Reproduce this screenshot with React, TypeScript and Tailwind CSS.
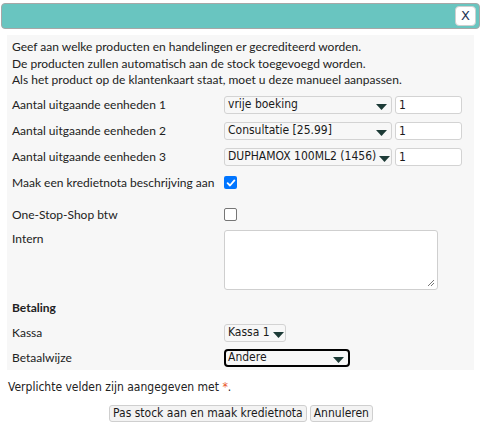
import React from "react";

const FONT = "font-['Lato','Open_Sans',sans-serif] text-[12px] text-[#222] whitespace-nowrap";
const LABEL = `${FONT} leading-[18px]`;
const CTRL = "font-['DejaVu_Sans_Condensed','DejaVu_Sans',sans-serif] text-[12px] text-[#1a1a1a]";

function Arrow() {
  return (
    <svg width="11" height="6" viewBox="0 0 11 6" className="shrink-0">
      <path d="M0 0 H11 L5.5 6 Z" fill="#1c3a36" />
    </svg>
  );
}

function Select({ text, w, focused = false, tight = false }: { text: string; w: string; focused?: boolean; tight?: boolean }) {
  return (
    <div
      className={`${w} h-[18px] flex items-center ${tight ? "gap-[3px]" : "justify-between"} ${
        focused ? "border-2 border-black rounded-[4px] pl-[2px] pr-[4px]" : "border border-[#d3d3d3] rounded-[3px] pl-[3px] pr-[4px]"
      } bg-[#f7f7f7] ${CTRL} leading-none overflow-hidden whitespace-nowrap`}
    >
      <span className="pb-[1px]">{text}</span>
      <span className="pt-[4px]"><Arrow /></span>
    </div>
  );
}

function Input({ v }: { v: string }) {
  return (
    <div className={`w-[67px] h-[18px] border border-[#d3d3d3] rounded-[3px] bg-white flex items-center pl-[3px] ${CTRL} leading-none`}>
      {v}
    </div>
  );
}

function Checkbox({ checked }: { checked: boolean }) {
  return checked ? (
    <div className="w-[13px] h-[13px] rounded-[2px] bg-[#0075ff] flex items-center justify-center">
      <svg width="10" height="10" viewBox="0 0 10 10">
        <path d="M1.6 5.2 L4 7.5 L8.4 2.4" stroke="white" strokeWidth="1.8" fill="none" strokeLinecap="round" strokeLinejoin="round" />
      </svg>
    </div>
  ) : (
    <div className="w-[13px] h-[13px] rounded-[2px] border border-[#767676] bg-white" />
  );
}

function Row({ label, children, className = "" }: { label: string; children: React.ReactNode; className?: string }) {
  return (
    <div className={`flex items-center h-[18px] ${className}`}>
      <div className={`w-[212px] shrink-0 ${LABEL}`}>{label}</div>
      <div className="flex items-center gap-[3px]">{children}</div>
    </div>
  );
}

export default function App() {
  return (
    <div className="w-[481px] h-[427px] bg-white relative">
      <div className="mx-[1px] mt-[3px] h-[26px] bg-[#69c5c0] border border-[#a7a7a7] rounded-[4px] flex items-center justify-end pr-[3px]">
        <div className="w-[21px] h-[20px] bg-white rounded-[4px] border border-[#cfcfcf] flex items-center justify-center font-['DejaVu_Sans',sans-serif] text-[13px] text-[#1d3557]">
          X
        </div>
      </div>
      <div className="mx-[7px] mt-[6px] bg-[#f7f7f7] px-[5px] pt-[4px] pb-[3px]">
        <div className={`${FONT} leading-[16.5px]`}>
          <div>Geef aan welke producten en handelingen er gecrediteerd worden.</div>
          <div>De producten zullen automatisch aan de stock toegevoegd worden.</div>
          <div>Als het product op de klantenkaart staat, moet u deze manueel aanpassen.</div>
        </div>
        <div className="mt-[7px] flex flex-col gap-[8px]">
          <Row label="Aantal uitgaande eenheden 1">
            <Select text="vrije boeking" w="w-[168px]" />
            <Input v="1" />
          </Row>
          <Row label="Aantal uitgaande eenheden 2">
            <Select text="Consultatie [25.99]" w="w-[168px]" />
            <Input v="1" />
          </Row>
          <Row label="Aantal uitgaande eenheden 3">
            <Select text="DUPHAMOX 100ML2 (1456)" w="w-[168px]" tight />
            <Input v="1" />
          </Row>
          <Row label="Maak een kredietnota beschrijving aan">
            <Checkbox checked />
          </Row>
        </div>
        <Row label="One-Stop-Shop btw" className="mt-[14px]">
          <Checkbox checked={false} />
        </Row>
        <div className="flex items-start mt-[6px]">
          <div className={`w-[212px] shrink-0 ${LABEL}`}>Intern</div>
          <div className="relative w-[214px] h-[60px] bg-white border border-[#cfcfcf] rounded-[3px]">
            <svg width="8" height="8" viewBox="0 0 8 8" className="absolute right-[2px] bottom-[2px]">
              <path d="M7 1 L1 7 M7 4 L4 7" stroke="#777" strokeWidth="1" />
            </svg>
          </div>
        </div>
        <div className={`mt-[9px] h-[18px] flex items-center ${LABEL} font-bold`}>Betaling</div>
        <Row label="Kassa" className="mt-[7px]">
          <Select text="Kassa 1" w="w-[62px]" tight />
        </Row>
        <Row label="Betaalwijze" className="mt-[7px]">
          <Select text="Andere" w="w-[126px]" focused />
        </Row>
      </div>
      <div className={`ml-[8px] mt-[8px] ${CTRL} text-[11.5px] text-[#222]`}>
        Verplichte velden zijn aangegeven met <span className="text-[#e8531f]">*</span>.
      </div>
      <div className="flex justify-center gap-[3px] mt-[9px] pl-[1px]">
        <div className={`h-[17px] px-[3px] border border-[#cfcfcf] rounded-[3px] bg-[#f3f3f3] flex items-center ${CTRL} leading-none`}>
          Pas stock aan en maak kredietnota
        </div>
        <div className={`h-[17px] px-[3px] border border-[#cfcfcf] rounded-[3px] bg-[#f3f3f3] flex items-center ${CTRL} leading-none`}>
          Annuleren
        </div>
      </div>
    </div>
  );
}
